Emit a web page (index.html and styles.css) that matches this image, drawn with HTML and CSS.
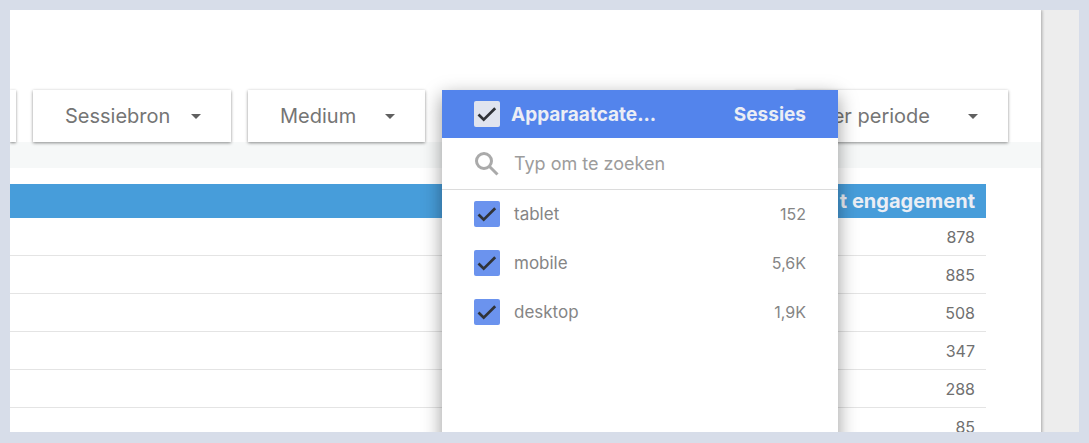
FILE: index.html
```
<!DOCTYPE html>
<html lang="nl">
<head>
    <meta charset="UTF-8">
    <meta name="viewport" content="width=device-width, initial-scale=1.0">
    <title>Sessies per apparaatcategorie</title>
    <link rel="stylesheet" href="styles.css">
</head>
<body>
    <div class="viewport">
        <main class="report">
            <div class="filters">
                <button class="filter filter-cut" type="button" aria-label="Vorige filter"></button>
                <button class="filter filter-source" type="button">Sessiebron <span class="caret"></span></button>
                <button class="filter filter-medium" type="button">Medium <span class="caret"></span></button>
                <div class="filter-device">
                    <div class="dropdown">
                        <div class="dropdown-header">
                            <input type="checkbox" id="all" class="check check-all" checked>
                            <label for="all">Apparaatcate...</label>
                            <span class="value">Sessies</span>
                        </div>
                        <div class="dropdown-search">
                            <svg class="search-icon" viewBox="0 0 26 26" aria-hidden="true">
                                <circle cx="10" cy="10" r="7.5"/>
                                <path d="M15.5 15.5L23.5 23.5"/>
                            </svg>
                            <input type="text" placeholder="Typ om te zoeken" aria-label="Typ om te zoeken">
                        </div>
                        <div class="option">
                            <input type="checkbox" id="tablet" class="check" checked>
                            <label for="tablet">tablet</label>
                            <span class="value">152</span>
                        </div>
                        <div class="option">
                            <input type="checkbox" id="mobile" class="check" checked>
                            <label for="mobile">mobile</label>
                            <span class="value">5,6K</span>
                        </div>
                        <div class="option">
                            <input type="checkbox" id="desktop" class="check" checked>
                            <label for="desktop">desktop</label>
                            <span class="value">1,9K</span>
                        </div>
                    </div>
                </div>
                <button class="filter filter-period" type="button">er periode <span class="caret"></span></button>
            </div>
            <div class="band"></div>
            <table class="results">
                <thead>
                    <tr><th>t engagement</th></tr>
                </thead>
                <tbody>
                    <tr><td>878</td></tr>
                    <tr><td>885</td></tr>
                    <tr><td>508</td></tr>
                    <tr><td>347</td></tr>
                    <tr><td>288</td></tr>
                    <tr><td>85</td></tr>
                </tbody>
            </table>
        </main>
    </div>
</body>
</html>
```

FILE: styles.css
```
* {
    box-sizing: border-box;
}
body {
    margin: 0;
    height: 100vh;
    padding: 10px 10px 11px;
    background-color: #d7dde9;
    font-family: Inter, "Liberation Sans", sans-serif;
    color: #707070;
}
button,
input {
    font-family: inherit;
}
.viewport {
    height: 100%;
    padding-right: 38px;
    background-color: #ededed;
    overflow: hidden;
}
.report {
    min-height: 100%;
    padding-top: 80px;
    background-color: #fff;
    box-shadow: 1px 0 3px rgba(0, 0, 0, 0.3);
}

/* filters */
.filters {
    display: flex;
    gap: 17px;
    padding-right: 33px;
}
.filter {
    display: flex;
    align-items: center;
    justify-content: space-between;
    height: 52px;
    padding: 0 30px 0 32px;
    border: none;
    background-color: #fff;
    box-shadow: 0 1px 3px rgba(0, 0, 0, 0.45);
    color: #757575;
    font-size: 20px;
    white-space: nowrap;
    cursor: pointer;
}
.filter-cut {
    width: 6px;
    padding: 0;
}
.filter-source {
    width: 198px;
}
.filter-medium {
    width: 177px;
}
.filter-period {
    flex: 1;
    justify-content: flex-end;
    gap: 38px;
    margin-left: -60px;
}
.caret {
    border: 5px solid transparent;
    border-top-color: #606060;
    border-bottom: none;
}
.band {
    height: 26px;
    background-color: #f6f8f8;
}

/* opened filter */
.filter-device {
    position: relative;
    z-index: 1;
    width: 396px;
}
.dropdown {
    position: absolute;
    top: 0;
    left: 0;
    width: 100%;
    min-height: 480px;
    background-color: #fff;
    box-shadow: 0 6px 18px rgba(0, 0, 0, 0.4);
    color: #858585;
}
.dropdown-header,
.dropdown-search,
.option {
    display: flex;
    align-items: center;
    gap: 14px;
    padding: 0 32px;
}
.dropdown-header {
    height: 48px;
    gap: 11px;
    background-color: #5384ec;
    color: #ebeef5;
    font-size: 19px;
    font-weight: 700;
}
.dropdown-search {
    height: 52px;
    border-bottom: 1px solid #dcdcdc;
}
.dropdown-search input {
    flex: 1;
    min-width: 0;
    padding: 0;
    border: none;
    outline: none;
    color: #858585;
    font-size: 18px;
}
.dropdown-search input::placeholder {
    color: #9c9c9c;
    opacity: 1;
}
.search-icon {
    width: 26px;
    height: 26px;
    fill: none;
    stroke: #aaa;
    stroke-width: 3;
}
.option {
    height: 49px;
    padding-bottom: 2px;
    font-size: 17px;
}
.value {
    margin-left: auto;
}
.option .value {
    font-size: 16px;
}
.check {
    appearance: none;
    width: 26px;
    height: 26px;
    margin: 0;
    border-radius: 2px;
    background-color: #6b93ee;
}
.check:checked {
    background-image: url("data:image/svg+xml,%3Csvg xmlns='http://www.w3.org/2000/svg' viewBox='0 0 26 26'%3E%3Cpath d='M4.5 13.5L9.7 18.7L21.2 7.2' fill='none' stroke='%23303338' stroke-width='2.7'/%3E%3C/svg%3E");
}
.check-all {
    background-color: #e0e4ef;
}

/* table */
.results {
    width: calc(100% - 55px);
    margin-top: 16px;
    border-collapse: separate;
    border-spacing: 0;
    text-align: right;
}
.results th {
    height: 34px;
    padding: 0 11px 0 0;
    background-color: #479dda;
    color: #ebeef5;
    font-size: 20px;
}
.results td {
    height: 38px;
    padding: 0 11px 0 0;
    border-bottom: 1px solid #e4e4e4;
    font-size: 16px;
}
```
